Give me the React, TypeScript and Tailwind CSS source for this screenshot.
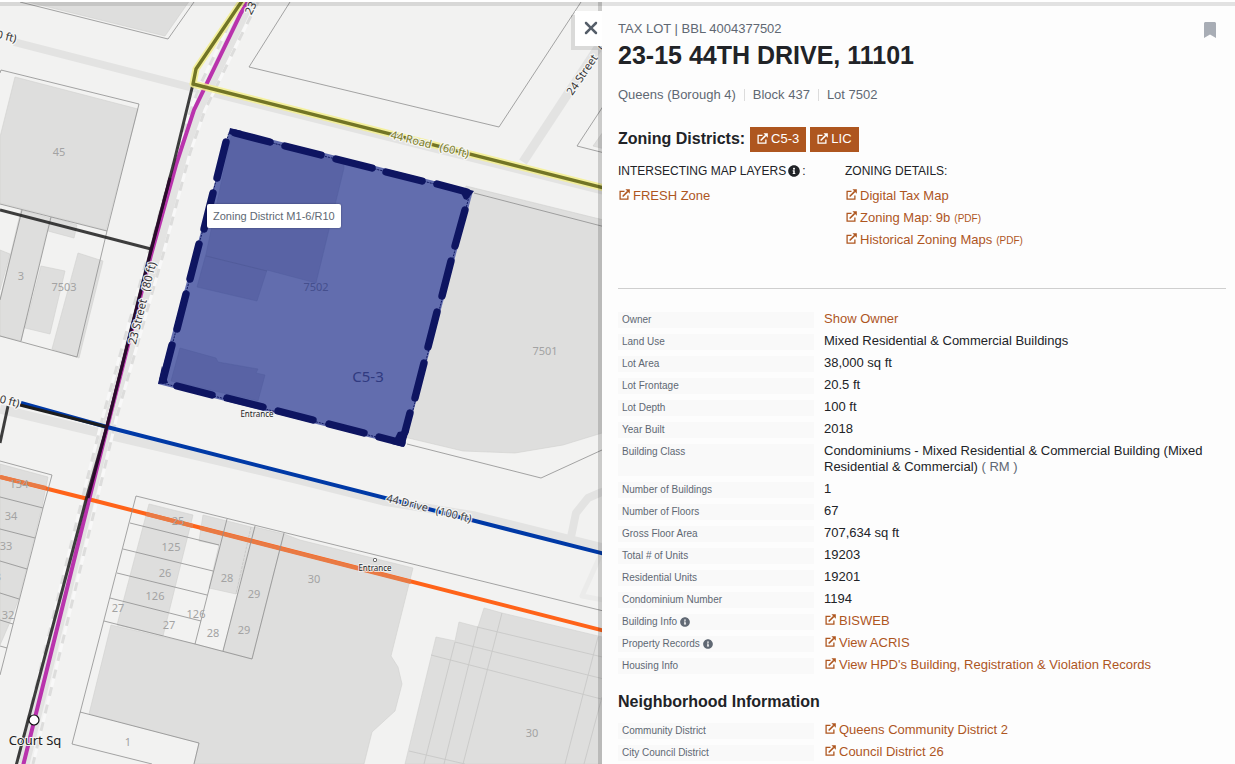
import { FaBookmark, FaInfoCircle } from "react-icons/fa";
import { FaXmark } from "react-icons/fa6";
import type { ReactNode } from "react";

type Pt = [number, number, number, number];

const buildings = [
  "20,0 190,0 165,36 20,0",
  "15,77 138,109 106,230 0,203 0,137",
  "21,210 50,218 21,341 0,336 0,300",
  "0,250 10,254 0,290",
  "51,217 77,225 74,238 48,231",
  "41,266 65,271 50,334 25,328",
  "78,253 103,261 79,358 52,349",
  "466,186 640,229 640,420 602,433 563,445 515,453 463,451 400,436",
  "640,80 593,146 640,158",
  "0,464 48,477 42,507 19,598 10,622 0,645",
  "149,504 193,515 163,636 117,625",
  "203,515 255,528 236,594 209,588 219,545 199,541",
  "255,527 284,534 252,659 223,651",
  "284,534 300,540 413,568 391,656 398,667 402,684 395,711 372,732 364,764 194,764 199,743 89,714 111,625 163,637 195,644 252,659",
  "484,608 502,613 640,646 640,764 405,764 436,637 455,641 459,622 478,627",
];

const lotLines = [
  "20,2 168,39 194,2",
  "290,2 249,67 499,127 581,2",
  "640,50 577,146 640,162",
  "0,73 1,70 139,104 107,231 77,357 0,336",
  "0,204 107,231",
  "22,210 0,300",
  "51,217 21,341",
  "474,193 640,236",
  "407,444 541,478 602,450 640,432",
  "0,461 52,475 43,508 0,675",
  "0,497 43,508",
  "0,529 35,538",
  "0,561 27,569",
  "0,593 19,599",
  "0,620 13,624",
  "0,646 7,648",
  "152,764 72,744 136,496 640,620",
  "130,523 219,545",
  "123,549 213,571",
  "117,573 207,595",
  "110,598 201,621",
  "104,621 195,644 252,659 284,533",
  "227,519 195,644",
  "255,526 223,651",
  "80,712 199,743 194,764",
];

const roofLines = [
  "477,627 640,666",
  "455,642 640,688",
  "431,655 640,709",
  "409,751 465,764",
  "502,613 463,764",
  "478,627 444,764",
  "455,642 424,764",
  "598,637 565,764",
  "602,697 584,764",
];

const dashes: Pt[] = [
  [235, 133, 270, 142],
  [285, 146, 321, 155],
  [336, 159, 372, 168],
  [386, 172, 422, 181],
  [437, 184, 467, 192],
  [226, 142, 217, 178],
  [213, 193, 204, 229],
  [199, 244, 190, 279],
  [186, 294, 177, 329],
  [172, 345, 163, 380],
  [465, 210, 455, 246],
  [451, 261, 442, 296],
  [437, 312, 428, 347],
  [424, 363, 415, 398],
  [410, 413, 405, 432],
  [177, 386, 212, 395],
  [227, 398, 263, 407],
  [278, 411, 313, 420],
  [329, 424, 364, 433],
  [379, 437, 402, 443],
];

const lotNumbers: [number, number, string][] = [
  [59, 156, "45"],
  [21, 280, "3"],
  [64, 291, "7503"],
  [545, 355, "7501"],
  [19, 488, "134"],
  [11, 520, "34"],
  [6, 550, "33"],
  [-2, 581, "3"],
  [8, 619, "32"],
  [178, 525, "25"],
  [171, 551, "125"],
  [165, 577, "26"],
  [155, 600, "126"],
  [118, 612, "27"],
  [196, 618, "126"],
  [169, 629, "27"],
  [227, 582, "28"],
  [213, 637, "28"],
  [254, 598, "29"],
  [244, 634, "29"],
  [314, 583, "30"],
  [532, 737, "30"],
  [128, 746, "1"],
];

const streetLabels: { x: number; y: number; angle: number; color: string; text: string }[] = [
  { x: 429, y: 148, angle: 14, color: "#7b7d29", text: "44 Road   (60 ft)" },
  { x: 428, y: 512, angle: 14, color: "#444444", text: "44 Drive   (100 ft)" },
  { x: 146, y: 304, angle: -76, color: "#333333", text: "23 Street   (80 ft)" },
  { x: 262, y: -5, angle: -62, color: "#333333", text: "23 Street" },
  { x: 596, y: 61, angle: -56, color: "#333333", text: "24 Street   (60 ft)" },
  { x: 1, y: 39, angle: 14, color: "#333333", text: "(60 ft)" },
  { x: 1, y: 403, angle: 14, color: "#333333", text: "(100 ft)" },
];

function LotMap() {
  const leftCurb = "236,8 222,40 200,85 180,140 148,255 103,416 82,500 17,764";
  const rightCurb = "259,0 240,38 205,110 190,153 163,255 117,416 97,500 33,764";
  return (
    <svg
      className="block h-[764px] w-[640px]"
      viewBox="0 0 640 764"
      role="img"
      aria-label="Zoning map"
      fontFamily='"Noto Sans", sans-serif'
      textAnchor="middle"
    >
      <rect width="640" height="764" fill="#f2f2f1" />
      <g fill="none" stroke="#e3e3e2" strokeLinejoin="round">
        <polyline points="14,42 193,88 640,200" strokeWidth="8" />
        <polyline points="640,-16 523,162" strokeWidth="9" />
        <polyline points="0,409 113,436 300,480 383,501 475,516 640,557" strokeWidth="9" />
        <polyline points="250,0 200,105 185,150 156,255 109,420 89,500 24,764" strokeWidth="11" />
        <polyline points="640,482 602,492 588,498 576,513 571,537" strokeWidth="8" />
        <polyline points="600,556 582,596 640,607" strokeWidth="5" stroke="#ebebea" />
      </g>
      <g fill="none" strokeWidth="3">
        <polyline points={leftCurb} stroke="#f8f8f8" />
        <polyline points={rightCurb} stroke="#f8f8f8" />
        <polyline points={leftCurb} stroke="#dddddc" strokeDasharray="9 9" />
        <polyline points={rightCurb} stroke="#dddddc" strokeDasharray="9 9" />
      </g>
      <g fill="#dededd" stroke="#d0d0cf" strokeWidth="0.6">
        {buildings.map((points) => (
          <polygon key={points} points={points} />
        ))}
      </g>
      <g fill="none" stroke="#c8c8c7" strokeWidth="0.9">
        {roofLines.map((points) => (
          <polyline key={points} points={points} />
        ))}
        <polyline points="251,527 236,594" strokeDasharray="3 1" />
      </g>
      <g fill="none" strokeWidth="4">
        <polyline points="0,477 88,499 640,640" stroke="#ff6319" />
        <path d="M0 477 46 488M146 514 193 526M200 528 411 582" stroke="#e97a44" />
        <polyline points="252,-6 241,13 194,110 176,165 151,255 108,424 89,500 23,766" stroke="#b933ad" />
        <polyline points="21,403 107,427 640,563" stroke="#0039a6" />
      </g>
      <g fill="none" stroke="#8e8e8e" strokeWidth="0.8">
        {lotLines.map((points) => (
          <polyline key={points} points={points} />
        ))}
      </g>
      <g fill="none" stroke="#1d1d1d" strokeWidth="3">
        <polyline points="193,84 174,162 151,249 107,426 86,500 16,766" strokeOpacity="0.85" />
        <polyline points="0,210 151,249" strokeOpacity="0.85" />
        <polyline points="20,405 107,427" />
        <polyline points="8,406 0,443" strokeOpacity="0.85" />
      </g>
      <path d="M170 178 151 251 107 426 88 498" fill="none" stroke="#2b0a2c" strokeWidth="3" />
      <g fill="none" strokeLinejoin="round">
        <polyline points="244,-2 196,69 193,84 640,197" stroke="#f5f08e" strokeWidth="7" strokeOpacity="0.85" />
        <polyline points="244,-2 196,69 193,84 640,197" stroke="#727526" strokeWidth="3.4" />
      </g>
      <polygon points="230,129 473,191 404,446 158,384" fill="#626dae" />
      <g fill="#5963a5" stroke="#535e9e" strokeWidth="0.5">
        <polygon points="232,132 344,162 344,168 316,283 267,270 257,301 197,287 206,254" />
        <polygon points="180,348 216,358 218,362 258,369 256,373 265,375 258,401 171,381" />
      </g>
      <path d="M206 256 267 271" stroke="#4f5997" strokeWidth="0.7" />
      <polygon
        points="229,132 470,193 404,444 162,383"
        fill="none"
        stroke="#101962"
        strokeWidth="1"
        strokeDasharray="2 1"
      />
      <g stroke="#0e1561" strokeWidth="7.4" strokeLinecap="round">
        {dashes.map(([x1, y1, x2, y2]) => (
          <line key={`${x1}-${y1}`} x1={x1} y1={y1} x2={x2} y2={y2} />
        ))}
      </g>
      <g fill="#0e1561">
        <polygon points="230,128 242,131 240,137 229,134" />
        <polygon points="458,187 474,191 467,200 464,199" />
        <polygon points="158,384 162,366 168,383" />
        <polygon points="398,432 409,430 404,447 392,444" />
      </g>
      <text x="316" y="291" fontSize="11" fill="#454f8d">
        7502
      </text>
      <text x="368" y="382" fontSize="15" fill="#303a80">
        C5-3
      </text>
      <g fontSize="11" fill="#a3a3a3">
        {lotNumbers.map(([x, y, label]) => (
          <text key={`${x}-${y}`} x={x} y={y}>
            {label}
          </text>
        ))}
      </g>
      <g
        fontSize="11"
        stroke="#f8f8f7"
        strokeWidth="2.5"
        strokeOpacity="0.9"
        paintOrder="stroke"
        strokeLinejoin="round"
      >
        {streetLabels.map(({ x, y, angle, color, text }) => (
          <text
            key={`${x}-${y}`}
            x={x}
            y={y}
            fill={color}
            transform={`rotate(${angle} ${x} ${y})`}
            className="whitespace-pre"
          >
            {text}
          </text>
        ))}
      </g>
      <g fontSize="8" fill="#222222" stroke="#f4f4f3" strokeWidth="1.5" paintOrder="stroke">
        <text x="257" y="417">
          Entrance
        </text>
        <text x="375" y="571">
          Entrance
        </text>
      </g>
      <rect x="373.5" y="558.5" width="3" height="3" rx="1" fill="#ffffff" stroke="#444444" strokeWidth="1" />
      <circle cx="34" cy="720" r="5" fill="#ffffff" stroke="#111111" strokeWidth="1.2" />
      <text x="35" y="745" fontSize="13" fill="#222222" stroke="#f4f4f3" strokeWidth="2" paintOrder="stroke">
        Court Sq
      </text>
    </svg>
  );
}

function ExternalIcon({ className }: { className: string }) {
  return (
    <svg className={className} viewBox="0 0 12 12" fill="none" stroke="currentColor" strokeWidth="1.4" aria-hidden>
      <path d="M6 2.5H1.2V11H9.7V7.2" />
      <path d="M4 8.2 9.6 2.6" strokeWidth="1.7" />
      <path d="M7 .4h4.8v4.8z" fill="currentColor" stroke="none" />
    </svg>
  );
}

function Ext({ children, note }: { children: ReactNode; note?: string }) {
  return (
    <a href="#" className="text-[#ae561f] hover:underline">
      <ExternalIcon className="mr-[3px] ml-px inline size-[11px] align-baseline" />
      {children}
      {note && <span className="ml-1 text-[10px]">{note}</span>}
    </a>
  );
}

function District({ children }: { children: ReactNode }) {
  return (
    <a href="#" className="flex h-[25px] items-center gap-[3px] bg-[#ae561f] px-[7px] pb-0.5 text-[13px] text-white">
      <ExternalIcon className="size-[11px]" />
      {children}
    </a>
  );
}

function Row({ label, info, children }: { label: string; info?: boolean; children: ReactNode }) {
  return (
    <div className="mb-1.5 flex gap-2.5">
      <dt className="flex w-[196px] shrink-0 items-start bg-[#f9f9f9] px-1 text-[10px] leading-4 text-[#606873]">
        {label}
        {info && <FaInfoCircle className="mt-[3px] ml-[3px] size-2.5" aria-hidden />}
      </dt>
      <dd className="-mt-px mb-px flex-1 text-[13px] leading-4">{children}</dd>
    </div>
  );
}

export default function App() {
  return (
    <div className="flex h-screen overflow-hidden bg-[#fdfdfd] font-['Liberation_Sans',Arial,sans-serif] text-[#212327]">
      <div className="absolute inset-x-0 top-0 z-20 h-1.5 border-b-4 border-[rgba(10,10,10,0.11)] bg-white bg-clip-padding" />
      <main className="relative min-w-0 flex-1 overflow-hidden bg-[#f2f2f1]">
        <LotMap />
        <div className="absolute top-[204px] left-[207px] rounded-xs bg-white px-1.5 py-1 text-[11px] leading-4 whitespace-nowrap text-[#606873] shadow-[0_0_2px_rgba(0,0,0,0.4)]">
          Zoning District M1-6/R10
        </div>
      </main>
      <aside className="relative w-[633px] shrink-0 bg-[#fdfdfd] shadow-[-4px_0_0_rgba(10,10,10,0.17)]">
        <button
          type="button"
          aria-label="Close"
          className="absolute top-[11px] left-[-27px] flex h-[35px] w-[27px] items-center justify-center bg-white pl-1 pb-0.5 text-[#555e69] shadow-[-4px_4px_0_rgba(10,10,10,0.1)]"
        >
          <FaXmark className="size-5 shrink-0" />
        </button>
        <div className="h-full overflow-y-auto pt-[21px] pr-[9px] pl-4 [scrollbar-width:none]">
          <header>
            <div className="flex items-start justify-between">
              <p className="text-[13px] leading-4 text-[#606873]">TAX LOT | BBL 4004377502</p>
              <button type="button" aria-label="Bookmark" className="mt-px mr-2 text-[#a8adb5]">
                <FaBookmark className="size-4" />
              </button>
            </div>
            <h1 className="text-[25px] leading-[34px] font-bold">23-15 44TH DRIVE, 11101</h1>
            <p className="mt-[17px] flex items-center text-[13px] leading-4 text-[#606873]">
              <span className="mr-2 border-r border-[#dcdcdc] pr-2 leading-3">Queens (Borough 4)</span>
              <span className="mr-2 border-r border-[#dcdcdc] pr-2 leading-3">Block 437</span>
              <span className="leading-3">Lot 7502</span>
            </p>
          </header>

          <div className="mt-[26px] flex items-center gap-1">
            <h2 className="mr-px pb-0.5 text-[16px] leading-5 font-bold">Zoning Districts:</h2>
            <District>C5-3</District>
            <District>LIC</District>
          </div>

          <div className="mt-[11px] flex">
            <section className="w-[227px]">
              <h3 className="flex items-center gap-0.5 text-[12px] leading-4">
                INTERSECTING MAP LAYERS <FaInfoCircle className="size-3" aria-hidden />:
              </h3>
              <p className="mt-1.5 text-[13px] leading-[22px]">
                <Ext>FRESH Zone</Ext>
              </p>
            </section>
            <section>
              <h3 className="text-[12px] leading-4">ZONING DETAILS:</h3>
              <ul className="mt-1.5 text-[13px] leading-[22px]">
                <li className="h-[22px]">
                  <Ext>Digital Tax Map</Ext>
                </li>
                <li className="h-[22px]">
                  <Ext note="(PDF)">Zoning Map: 9b</Ext>
                </li>
                <li className="h-[22px]">
                  <Ext note="(PDF)">Historical Zoning Maps</Ext>
                </li>
              </ul>
            </section>
          </div>

          <hr className="mt-[37px] mb-[23px] border-[#cfcfcf]" />

          <dl>
            <Row label="Owner">
              <button type="button" className="block text-[#ae561f]">
                Show Owner
              </button>
            </Row>
            <Row label="Land Use">Mixed Residential &amp; Commercial Buildings</Row>
            <Row label="Lot Area">38,000 sq ft</Row>
            <Row label="Lot Frontage">20.5 ft</Row>
            <Row label="Lot Depth">100 ft</Row>
            <Row label="Year Built">2018</Row>
            <Row label="Building Class">
              Condominiums - Mixed Residential &amp; Commercial Building (Mixed Residential &amp; Commercial){" "}
              <span className="text-[#606873]">( RM )</span>
            </Row>
            <Row label="Number of Buildings">1</Row>
            <Row label="Number of Floors">67</Row>
            <Row label="Gross Floor Area">707,634 sq ft</Row>
            <Row label="Total # of Units">19203</Row>
            <Row label="Residential Units">19201</Row>
            <Row label="Condominium Number">1194</Row>
            <Row label="Building Info" info>
              <Ext>BISWEB</Ext>
            </Row>
            <Row label="Property Records" info>
              <Ext>View ACRIS</Ext>
            </Row>
            <Row label="Housing Info">
              <Ext>View HPD's Building, Registration &amp; Violation Records</Ext>
            </Row>
          </dl>

          <h2 className="mt-[18px] mb-[11px] text-[16px] leading-5 font-bold">Neighborhood Information</h2>
          <dl>
            <Row label="Community District">
              <Ext>Queens Community District 2</Ext>
            </Row>
            <Row label="City Council District">
              <Ext>Council District 26</Ext>
            </Row>
          </dl>
        </div>
      </aside>
    </div>
  );
}
